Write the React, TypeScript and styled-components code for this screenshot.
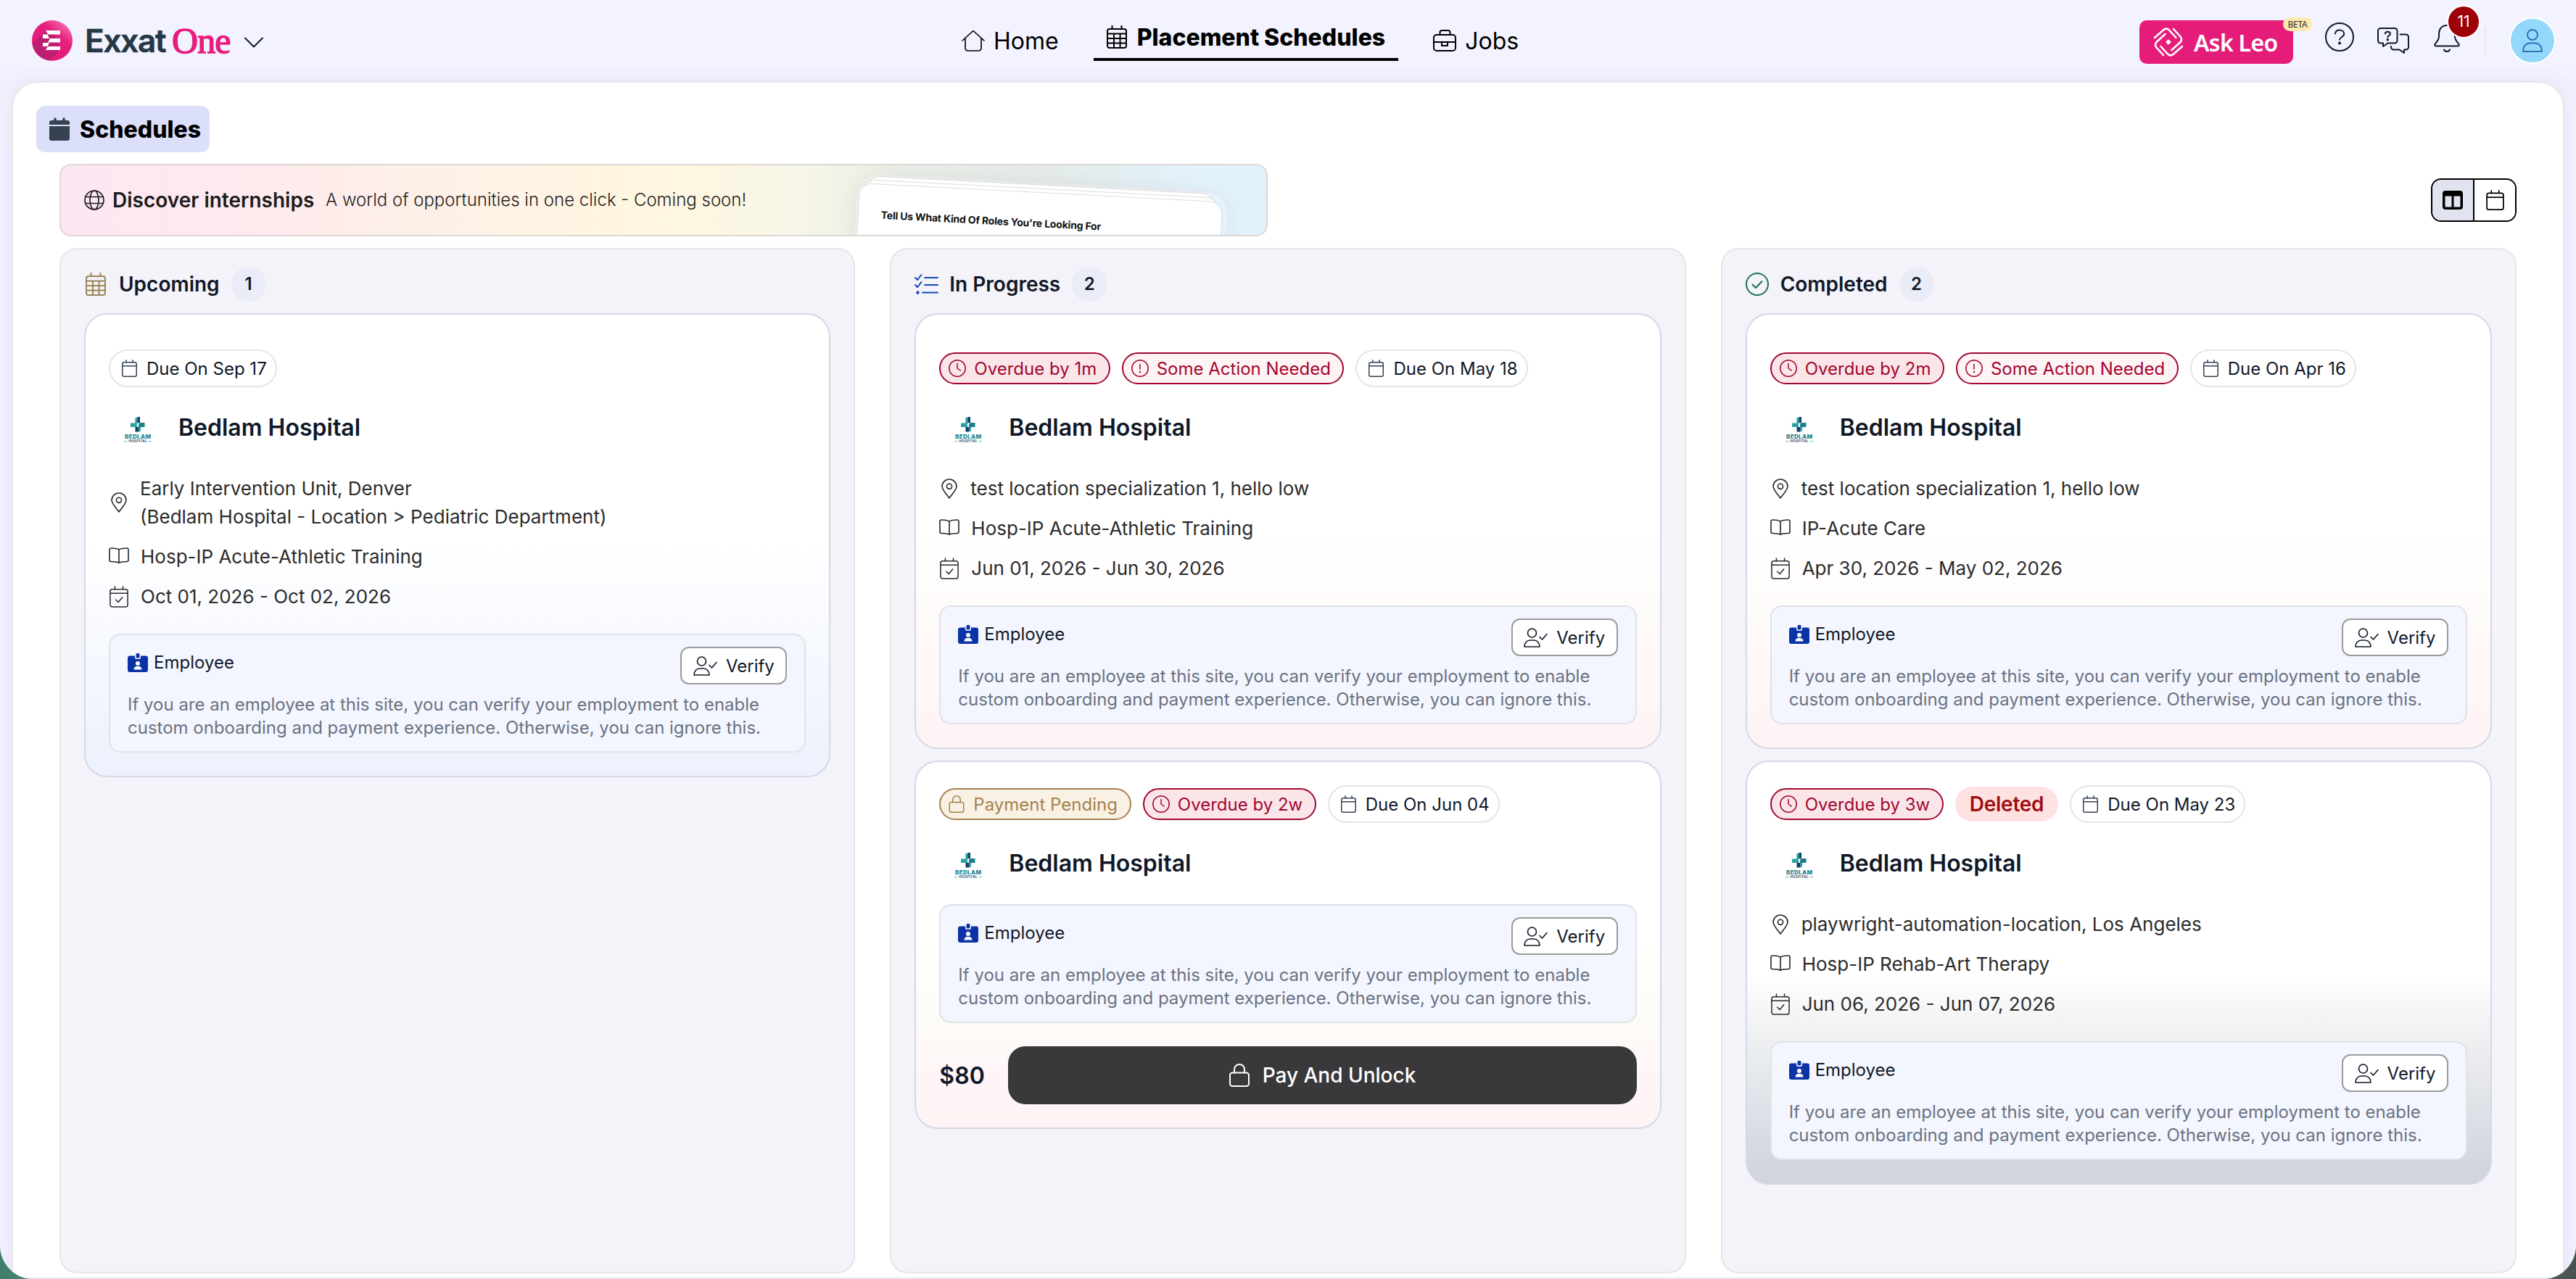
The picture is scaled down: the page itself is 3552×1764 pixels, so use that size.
import React from "react";
import styled, { createGlobalStyle, css } from "styled-components";

const Global = createGlobalStyle`
  *, *::before, *::after { box-sizing: border-box; }
  html, body { margin: 0; padding: 0; }
  body {
    background: linear-gradient(90deg, #417f6b 0, #4c8a74 60px, #5a6660 3500px, #46504c 3552px);
    font-family: Inter, "Liberation Sans", sans-serif;
    color: #101828;
    overflow: hidden;
  }
`;

/* ---------- icons ---------- */

const Glyph = styled.svg<{ $top?: number; $thin?: boolean }>`
  display: block;
  flex: none;
  fill: none;
  stroke: currentColor;
  stroke-width: ${(p) => (p.$thin ? 1.650 : 2)};
  stroke-linecap: round;
  stroke-linejoin: round;
  overflow: visible;
  margin-top: ${(p) => p.$top ?? 0}px;
`;

type IconProps = { w: number; h: number };

const HomeIcon = () => (
  <Glyph $thin width={32} height={30} viewBox="0 0 32 30">
    <path d="M1 15 16 1.500 31 15M5 12v13.500a3.500 3.500 0 0 0 3.500 3.500h15a3.500 3.500 0 0 0 3.500-3.500V12" />
  </Glyph>
);

const GridCalendarIcon = () => (
  <Glyph width={28} height={32} viewBox="0 0 28 32">
    <g strokeLinecap="butt">
      <path d="M7.500 0v5M20.500 0v5" />
      <rect x="1" y="5" width="26" height="26" rx="3" />
      <path d="M1 11.500h26M10 11.500v19.500M18.500 11.500v19.500M1 18h26M1 24.500h26" />
    </g>
  </Glyph>
);

const CalendarIcon = ({ w, h }: IconProps) => (
  <Glyph width={w} height={h} viewBox="0 0 28 32">
    <path d="M8 1v4M20 1v4M1 11.500h26" />
    <rect x="1" y="5" width="26" height="26" rx="3" />
  </Glyph>
);

const CalendarCheckIcon = () => (
  <Glyph $thin width={26} height={30} viewBox="0 0 28 32">
    <path d="M8 1v4M20 1v4M1 11h26M9.500 20.500l3.500 3.500 6-7" />
    <rect x="1" y="5" width="26" height="26" rx="3" />
  </Glyph>
);

const SolidCalendarIcon = () => (
  <Glyph width={28} height={32} viewBox="0 0 28 32">
    <path d="M8 2v5M20 2v5" strokeWidth="3.500" />
    <path d="M3 4h22a3 3 0 0 1 3 3v3H0V7a3 3 0 0 1 3-3zM0 12h28v17a3 3 0 0 1-3 3H3a3 3 0 0 1-3-3z" fill="currentColor" stroke="none" />
  </Glyph>
);

const BriefcaseIcon = () => (
  <Glyph width={32} height={30} viewBox="0 0 32 30">
    <rect x="1" y="7" width="30" height="22" rx="4" />
    <path d="M9.500 7V3.500A2.500 2.500 0 0 1 12 1h9a2.500 2.500 0 0 1 2.500 2.500V7M1 17h30M12 17v5h8v-5" />
  </Glyph>
);

const GlobeIcon = () => (
  <Glyph $thin width={28} height={28} viewBox="0 0 28 28">
    <circle cx="14" cy="14" r="13" />
    <ellipse cx="14" cy="14" rx="6" ry="13" />
    <path d="M2 9.500h24M2 18.500h24" />
  </Glyph>
);

const ChevronIcon = () => (
  <Glyph width={26} height={15} viewBox="0 0 26 15" $top={4}>
    <path d="M1 1.500l12 12 12-12" />
  </Glyph>
);

const QuestionIcon = () => (
  <Glyph width={40} height={40} viewBox="0 0 40 40" $top={-10}>
    <circle cx="20" cy="20" r="19" />
    <path d="M14 15.500c.3-3 2.500-5 6-5s6.200 2.200 6.200 5.200c0 4.200-6.200 4.300-6.200 8" />
    <circle cx="20" cy="28.500" r="1" fill="currentColor" />
  </Glyph>
);

const ChatIcon = () => (
  <Glyph width={44} height={36} viewBox="0 0 44 36">
    <path d="M4.500 1H24a3.500 3.500 0 0 1 3.500 3.500V18a3.500 3.500 0 0 1-3.500 3.500h-9.500L8 26v-4.500H4.500A3.500 3.500 0 0 1 1 18V4.500A3.500 3.500 0 0 1 4.500 1z" />
    <path d="M31.500 9.500h8A3.500 3.500 0 0 1 43 13v14a3.500 3.500 0 0 1-3.500 3.500H37V35l-6.500-4.500H22.500A3.500 3.500 0 0 1 19 27v-1" />
    <path d="M10.800 8.500c.2-1.800 1.500-2.800 3.500-2.800s3.600 1.200 3.600 3c0 2.400-3.600 2.400-3.600 4.600" />
    <circle cx="14.300" cy="16.700" r=".8" fill="currentColor" />
  </Glyph>
);

const BellIcon = () => (
  <Glyph width={36} height={40} viewBox="0 0 36 40">
    <path d="M18 2C11 2 7 7 7 13.500v4c0 4.500-3.500 7.500-5.500 10.500-.8 1.300 0 2.500 1.500 2.500h30c1.500 0 2.300-1.200 1.500-2.500C32.500 25 29 22 29 17.500v-4C29 7 25 2 18 2zM14 35.500a4.300 4 0 0 0 8 0" />
  </Glyph>
);

const PersonIcon = () => (
  <Glyph width={28} height={32} viewBox="0 0 28 32">
    <circle cx="14" cy="8" r="7" />
    <path d="M1 31c0-7 4-11.500 9.500-11.500h7C23 19.500 27 24 27 31z" />
  </Glyph>
);

const LeoIcon = () => (
  <Glyph width={40} height={40} viewBox="0 0 40 40">
    <g strokeWidth="2.600">
      <path d="M1 14 13.500 3q4-3 7.500.5L30.500 14" />
      <path d="M27 2l9.500 10.500q3 4 0 7.500L24.500 31" />
      <path d="M39 26 26.500 37q-4 3-7.500-.5L9.500 26" />
      <path d="M13 38 3.500 27.500q-3-4 0-7.500L15.500 9" />
    </g>
    <path d="M20 17.500l2.500 2.500-2.500 2.500-2.500-2.500z" fill="currentColor" />
  </Glyph>
);

const BoardIcon = () => (
  <Glyph width={28} height={26} viewBox="0 0 28 26">
    <path
      d="M4 0h20a4 4 0 0 1 4 4v18a4 4 0 0 1-4 4H4a4 4 0 0 1-4-4V4a4 4 0 0 1 4-4zM3.500 7.500v15h9v-15zM15.500 7.500v15h9v-15z"
      fill="currentColor"
      fillRule="evenodd"
      stroke="none"
    />
  </Glyph>
);

const TasksIcon = () => (
  <Glyph width={33} height={28} viewBox="0 0 33 28">
    <path d="M1 5l3 3 5.500-7M1 15l3 3 5.500-7M14 5h18M14 15h18M11 25.500h21" />
    <circle cx="4.500" cy="25.500" r="1.200" fill="currentColor" />
  </Glyph>
);

const DoneIcon = () => (
  <Glyph width={32} height={32} viewBox="0 0 32 32">
    <circle cx="16" cy="16" r="15" />
    <path d="M9.500 16.500l4.500 4.500 8.500-9" />
  </Glyph>
);

const ClockIcon = () => (
  <Glyph width={24} height={24} viewBox="0 0 24 24">
    <g strokeWidth="1.500">
      <circle cx="12" cy="12" r="11.200" />
      <path d="M12 5.500V12l4.300 3" />
    </g>
  </Glyph>
);

const AlertIcon = () => (
  <Glyph width={24} height={24} viewBox="0 0 24 24">
    <g strokeWidth="1.500">
      <circle cx="12" cy="12" r="11.200" />
      <path d="M12 6.500v6.500" />
      <circle cx="12" cy="17" r=".5" fill="currentColor" />
    </g>
  </Glyph>
);

const LockIcon = ({ w, h }: IconProps) => (
  <Glyph width={w} height={h} viewBox="0 0 28 32">
    <rect x="1" y="12.500" width="26" height="18.500" rx="3.500" />
    <path d="M7 12.500V8a7 7 0 0 1 14 0v4.500" />
  </Glyph>
);

const PinIcon = () => (
  <Glyph $thin width={22} height={28} viewBox="0 0 22 28">
    <path d="M11 27C8.500 23.500 1 15.500 1 10.800a10 9.800 0 0 1 20 0C21 15.500 13.500 23.500 11 27z" />
    <circle cx="11" cy="10.800" r="3.600" />
  </Glyph>
);

const BookIcon = () => (
  <Glyph $thin width={28} height={22} viewBox="0 0 28 22">
    <path d="M14 3C11 1.200 7 1 3 1a2 2 0 0 0-2 2v14.500a2 2 0 0 0 2 2c4 0 8 0 11 1.700 3-1.700 7-1.700 11-1.700a2 2 0 0 0 2-2V3a2 2 0 0 0-2-2c-4 0-8 .2-11 2zM14 3v18" />
  </Glyph>
);

const BadgeIcon = () => (
  <Glyph width={28} height={26} viewBox="0 0 28 26">
    <path
      d="M3 3.500h7V6a2 2 0 0 0 2 2h4a2 2 0 0 0 2-2V3.500h7a3 3 0 0 1 3 3V23a3 3 0 0 1-3 3H3a3 3 0 0 1-3-3V6.500a3 3 0 0 1 3-3z"
      fill="#0c33a6"
      stroke="none"
    />
    <rect x="11.500" y="0" width="5" height="6.500" rx="1.500" fill="#0c33a6" stroke="none" />
    <circle cx="14" cy="14" r="3" fill="#fff" stroke="none" />
    <path d="M8.500 22.500c0-3 2-4.500 4-4.500h3c2 0 4 1.500 4 4.500z" fill="#fff" stroke="none" />
  </Glyph>
);

const UserCheckIcon = () => (
  <Glyph $thin width={33} height={27} viewBox="0 0 33 27">
    <circle cx="11.500" cy="7" r="6" />
    <path d="M1 26c0-5.500 3.500-9 8-9h5c4.500 0 8 3.500 8 9zM22 12.500l3.500 3.500 6.500-7.500" />
  </Glyph>
);

const BrandMark = () => (
  <Glyph width={56} height={56} viewBox="0 0 56 56">
    <defs>
      <linearGradient id="brand" x1="0.85" y1="0.05" x2="0.45" y2="0.55">
        <stop offset="0" stopColor="#f472ae" />
        <stop offset="0.600" stopColor="#e6207f" />
        <stop offset="1" stopColor="#e51c7c" />
      </linearGradient>
      <clipPath id="brandClip">
        <circle cx="28" cy="28" r="28" />
      </clipPath>
    </defs>
    <g clipPath="url(#brandClip)" stroke="none">
      <rect width="56" height="56" fill="url(#brand)" />
      <path d="M20 14 0 32v24h24l15-15-9-25z" fill="#bf1f70" />
    </g>
    <path
      d="M19 14h20v5.500H22zM15 19.500h6.500l2.500 5.500h-9zM25 25h14v5.500H22zM15 31h9l-2.500 5h-6.500zM22 36h17v5H19z"
      fill="#fff"
      stroke="none"
    />
  </Glyph>
);

const MarkName = styled.text`
  font: 800 8px Inter, sans-serif;
  fill: #1b8088;
  stroke: none;
`;
const MarkSub = styled.text`
  font: 700 4.400px Inter, sans-serif;
  fill: #2a4468;
  stroke: none;
`;

const BedlamMark = () => (
  <Glyph width={40} height={36} viewBox="0 0 40 36">
    <g stroke="none">
      <path d="M16.500 1.500 20 0v9l-3.500 1z" fill="#1d9c9c" />
      <path d="M20 0h3v8h-3z" fill="#1c3a63" />
      <path d="M10 8.500h7L19 11v3h-9z" fill="#2aa3a0" />
      <path d="M22 8h7.500v6H21v-3z" fill="#1b7f8e" />
      <path d="M16.500 14h5v6.500h-5z" fill="#1c3a63" />
      <path d="M21 14h3v5.500l-3 1z" fill="#2aa3a0" />
    </g>
    <MarkName x="20" y="30" textAnchor="middle" textLength="36">BEDLAM</MarkName>
    <MarkSub x="20" y="35.200" textAnchor="middle" textLength="25">HOSPITAL</MarkSub>
    <path d="M1.500 33.700h3.500M35 33.700h3.500" stroke="#2aa3a0" strokeWidth=".8" />
  </Glyph>
);

/* ---------- shell ---------- */

const Page = styled.div`
  width: 3552px;
  height: 1764px;
  display: flex;
  flex-direction: column;
  background: linear-gradient(180deg, #f3f3ff 0, #f3f3ff 90px, #f0f0fc 112px, #f1f0ff 300px);
  border-radius: 0 0 46px 46px;
  overflow: hidden;
`;

const Header = styled.header`
  height: 112px;
  flex: none;
  display: flex;
  align-items: center;
  padding: 0 28px 0 44px;
`;

const Brand = styled.div`
  width: 1282px;
  display: flex;
  align-items: center;
`;
const Word = styled.span<{ $serif?: boolean }>`
  white-space: nowrap;
  line-height: 56px;
  ${(p) =>
    p.$serif
      ? css`
          font: 400 50px/56px "Liberation Serif", serif;
          color: #e71d7e;
          -webkit-text-stroke: 1.500px #e71d7e;
          width: 80px;
          letter-spacing: -0.900px;
          margin: 0 20px 0 8px;
        `
      : css`
          font-size: 44px;
          font-weight: 600;
          color: #263746;
          -webkit-text-stroke: 0.600px #263746;
          letter-spacing: -1.200px;
          width: 112px;
          margin-left: 17px;
        `}
`;

const Nav = styled.nav`
  display: flex;
  align-items: center;
  gap: 48px;
  color: #000;
`;
const NavItem = styled.a<{ $active?: boolean }>`
  display: flex;
  align-items: center;
  gap: 12px;
  height: 56px;
  font-size: 32px;
  white-space: nowrap;
  ${(p) =>
    p.$active &&
    css`
      font-weight: 800;
      padding: 0 18px 6px;
      border-bottom: 4px solid #000;
      gap: 14px;
    `}
`;

const Tools = styled.div`
  margin-left: auto;
  display: flex;
  align-items: center;
  color: #101828;
`;
const LeoButton = styled.button`
  position: relative;
  display: flex;
  align-items: center;
  gap: 15px;
  width: 212px;
  height: 60px;
  margin: 4px 44px 0 0;
  padding: 0 0 0 20px;
  border: 0;
  border-radius: 10px;
  background: #e61c7b;
  color: #fff;
  font: 600 32px "Noto Sans", sans-serif;
  letter-spacing: -0.700px;
  white-space: nowrap;
`;
const Beta = styled.span`
  position: absolute;
  left: 198px;
  top: -4px;
  width: 40px;
  height: 19px;
  border-radius: 10px;
  background: #fdeab0;
  color: #2b2b2b;
  font: 400 12px/19px "Noto Sans", sans-serif;
  letter-spacing: -0.200px;
  text-align: center;
`;
const Tool = styled.span<{ $gap: number; $drop?: number }>`
  position: relative;
  margin-right: ${(p) => p.$gap}px;
  margin-top: ${(p) => p.$drop ?? 0}px;
`;
const Alerts = styled.span`
  position: absolute;
  left: 18px;
  top: -26px;
  width: 46px;
  height: 46px;
  border: 2px solid #fff;
  border-radius: 50%;
  background: #9d0006;
  color: #fff;
  font-size: 21px;
  line-height: 42px;
  text-align: center;
`;
const Rule = styled.span`
  width: 2px;
  height: 40px;
  background: #f9dcee;
  margin-right: 32px;
`;
const Avatar = styled.span`
  width: 64px;
  height: 64px;
  border: 2px solid #fff;
  border-radius: 50%;
  background: #93d8fb;
  color: #2a77b5;
  display: grid;
  place-items: center;
`;

const Panel = styled.main`
  flex: 1;
  margin: 0 16px;
  padding: 32px 0 6px;
  border: 2px solid #e6e6eb;
  border-radius: 36px 36px 0 0;
  background: #fff;
  box-shadow: 0 0 24px rgba(120, 110, 200, 0.08);
  display: flex;
  flex-direction: column;
  gap: 16px;
`;

const PageTab = styled.div`
  align-self: flex-start;
  margin-left: 32px;
  width: 239px;
  height: 64px;
  display: flex;
  align-items: center;
  gap: 14px;
  padding-left: 18px;
  border-radius: 12px;
  background: #dbdffa;
  color: #364152;
  strong {
    font-size: 32px;
    font-weight: 800;
    color: #000;
  }
`;

const BannerRow = styled.div`
  display: flex;
  align-items: center;
  justify-content: space-between;
  padding: 0 64px;
`;
const Banner = styled.section`
  position: relative;
  width: 1666px;
  height: 100px;
  overflow: hidden;
  display: flex;
  align-items: center;
  padding: 0 0 1px 32px;
  border: 2px solid #ded9d6;
  border-radius: 16px;
  background: linear-gradient(90deg, #fde6f3 0, #feebec 20%, #fef2e5 36%, #fff7e0 50%, #f8f6e6 60%, #eaeee8 70%, #e4ebea 82%, #e3f3fe 96%, #e0f1fc 100%);
  color: #1c1c1c;
`;
const BannerTitle = styled.strong`
  width: 294px;
  margin-left: 11px;
  font-size: 28px;
  font-weight: 600;
  white-space: nowrap;
`;
const BannerText = styled.span`
  font-size: 24px;
  font-weight: 300;
  color: #222;
  white-space: nowrap;
`;
const Sheet = styled.div<{ $x: number; $y: number; $w: number; $outline?: boolean }>`
  position: absolute;
  left: ${(p) => p.$x}px;
  top: ${(p) => p.$y}px;
  width: ${(p) => p.$w}px;
  height: 200px;
  transform: rotate(3deg);
  transform-origin: 0 0;
  border-radius: ${(p) => (p.$outline ? 32 : 18)}px;
  background: ${(p) => (p.$outline ? "transparent" : "#fff")};
  border: ${(p) => (p.$outline ? "2px solid #e6e6ea" : "1px solid #dcdcdc")};
  box-shadow: ${(p) => (p.$outline ? "0 0 24px rgba(90,90,60,.08)" : "none")};
  padding: 32px 31px;
  font-size: 14px;
  font-weight: 700;
  line-height: 20px;
  letter-spacing: -0.180px;
  color: #111;
  white-space: nowrap;
`;

const Toggle = styled.div`
  display: flex;
  width: 118px;
  height: 60px;
  border: 2px solid #000;
  border-radius: 14px;
  overflow: hidden;
  color: #000;
`;
const ToggleCell = styled.button<{ $on?: boolean }>`
  flex: 1;
  display: grid;
  place-items: center;
  padding: 0;
  border: 0;
  color: inherit;
  background: ${(p) => (p.$on ? "#e1e4f0" : "#fff")};
  & + & {
    border-left: 2px solid #000;
  }
`;

/* ---------- board ---------- */

const Board = styled.div`
  flex: 1;
  display: grid;
  grid-template-columns: repeat(3, 1fr);
  gap: 48px;
  padding: 0 64px;
`;
const Column = styled.section`
  display: flex;
  flex-direction: column;
  gap: 16px;
  padding: 24px 32px;
  border: 2px solid #e5e5ea;
  border-radius: 24px;
  background: #f4f3f9;
`;
const ColumnHead = styled.header`
  height: 48px;
  display: flex;
  align-items: center;
  gap: 16px;
  font-size: 28px;
  font-weight: 600;
  color: #101828;
`;
const HeadIcon = styled.span<{ $color: string }>`
  width: 32px;
  display: flex;
  justify-content: center;
  color: ${(p) => p.$color};
`;
const Count = styled.span`
  width: 48px;
  height: 48px;
  border-radius: 50%;
  background: #eaedf8;
  font-size: 24px;
  line-height: 47px;
  text-align: center;
`;

type Tone = "blue" | "rose" | "warm" | "grey";
const fades: Record<Tone, string> = {
  blue: "#fff 50%, #edf2fd 96%",
  rose: "#fff 50%, #fff4f5 96%",
  warm: "#fff 50%, #fdfbf7 72%, #fff5f8 86%, #fff4f4 100%",
  grey: "#fff 50%, #f1f2f3 63%, #d1d5de 96%",
};
const CardBox = styled.article<{ $tone: Tone; $first: boolean }>`
  display: flex;
  flex-direction: column;
  gap: 24px;
  padding: ${(p) => (p.$first ? 48 : 32)}px 32px 32px;
  border: 2px solid #d3d9e7;
  border-radius: 32px;
  background: linear-gradient(180deg, ${(p) => fades[p.$tone]});
`;
const Chips = styled.div`
  display: flex;
  align-items: center;
  gap: 16px;
  height: 52px;
`;
type ChipKind = "due" | "overdue" | "action" | "pending" | "deleted";
const alertChip = css`
  gap: 11px;
  padding: 0 16.500px 0 11px;
  border: 2px solid #a3062f;
  color: #a3062f;
`;
const chipStyles = {
  due: css`
    height: 52px;
    padding: 0 12px 0 16px;
    border: 2px solid #e5e5ea;
    background: #fff;
    gap: 13px;
    svg { color: #344054; }
  `,
  overdue: css`
    ${alertChip}
    background: #fae6e9;
  `,
  action: css`
    ${alertChip}
    background: #fff4f5;
  `,
  pending: css`
    border: 2px solid #a5814f;
    background: #f9f1e4;
    color: #a5814f;
  `,
  deleted: css`
    height: 48px;
    padding: 0 20px;
    background: #fee2e2;
    color: #a10d12;
    font-size: 28px;
    font-weight: 600;
    letter-spacing: -0.250px;
  `,
};
const ChipBox = styled.span<{ $kind: ChipKind }>`
  height: 44px;
  display: flex;
  align-items: center;
  gap: 12px;
  padding: 0 17px 0 11px;
  border-radius: 26px;
  font-size: 24px;
  white-space: nowrap;
  ${(p) => chipStyles[p.$kind]}
`;

const Site = styled.div`
  height: 64px;
  display: flex;
  align-items: center;
`;
const SiteLogo = styled.span`
  width: 96px;
  padding: 5px 0 0 20px;
`;
const SiteName = styled.h3`
  margin: 0 0 1px;
  font-size: 32px;
  font-weight: 600;
  white-space: nowrap;
`;
const Facts = styled.div`
  display: flex;
  flex-direction: column;
  gap: 16px;
  padding: 8px 0;
  color: #2b2b2b;
`;
const Fact = styled.div`
  display: flex;
  align-items: center;
  font-size: 26px;
  line-height: 39px;
  white-space: nowrap;
`;
const FactIcon = styled.span<{ $lift?: number }>`
  width: 44px;
  display: flex;
  margin-top: ${(p) => -(p.$lift ?? 0)}px;
`;
const PinSlot = styled(FactIcon)`
  padding-left: 3px;
  width: 43px;
`;
const DateSlot = styled(FactIcon)`
  padding-left: 1px;
`;

const Notice = styled.div`
  height: 164px;
  padding: 16px 24px;
  border: 2px solid #e1e2e6;
  border-radius: 16px;
  background: #f3f6ff;
`;
const NoticeHead = styled.div`
  display: flex;
  justify-content: space-between;
  align-items: flex-start;
  height: 64px;
`;
const NoticeLabel = styled.span`
  display: flex;
  align-items: center;
  gap: 8px;
  height: 43px;
  font-size: 24px;
`;
const VerifyButton = styled.button`
  display: flex;
  align-items: center;
  gap: 12px;
  height: 52px;
  padding: 0 15.500px;
  border: 2px solid #9b9b9b;
  border-radius: 12px;
  background: #fff;
  color: #101828;
  font: 400 24px Inter, sans-serif;
`;
const NoticeText = styled.p`
  margin: 0;
  font-size: 24px;
  line-height: 32px;
  color: #6b7280;
  white-space: nowrap;
`;

const PayRow = styled.div`
  display: flex;
  align-items: center;
  margin-top: 8px;
  height: 80px;
`;
const Price = styled.span`
  width: 95px;
  font-size: 32px;
  font-weight: 600;
`;
const PayButton = styled.button`
  flex: 1;
  height: 80px;
  display: flex;
  align-items: center;
  justify-content: center;
  gap: 18px;
  border: 0;
  border-radius: 24px;
  background: #39393b;
  color: #fff;
  font: 500 28px Inter, sans-serif;
`;

/* ---------- data ---------- */

type CardData = {
  tone: Tone;
  chips: [ChipKind, string][];
  place?: string[];
  course?: string;
  dates?: string;
  price?: string;
};
type ColumnData = { title: string; color: string; icon: React.ReactNode; cards: CardData[] };

const columns: ColumnData[] = [
  {
    title: "Upcoming",
    color: "#9c8656",
    icon: <GridCalendarIcon />,
    cards: [
      {
        tone: "blue",
        chips: [["due", "Due On Sep 17"]],
        place: ["Early Intervention Unit, Denver", "(Bedlam Hospital - Location > Pediatric Department)"],
        course: "Hosp-IP Acute-Athletic Training",
        dates: "Oct 01, 2026 - Oct 02, 2026",
      },
    ],
  },
  {
    title: "In Progress",
    color: "#1149b8",
    icon: <TasksIcon />,
    cards: [
      {
        tone: "rose",
        chips: [["overdue", "Overdue by 1m"], ["action", "Some Action Needed"], ["due", "Due On May 18"]],
        place: ["test location specialization 1, hello low"],
        course: "Hosp-IP Acute-Athletic Training",
        dates: "Jun 01, 2026 - Jun 30, 2026",
      },
      {
        tone: "warm",
        chips: [["pending", "Payment Pending"], ["overdue", "Overdue by 2w"], ["due", "Due On Jun 04"]],
        price: "$80",
      },
    ],
  },
  {
    title: "Completed",
    color: "#1f7058",
    icon: <DoneIcon />,
    cards: [
      {
        tone: "rose",
        chips: [["overdue", "Overdue by 2m"], ["action", "Some Action Needed"], ["due", "Due On Apr 16"]],
        place: ["test location specialization 1, hello low"],
        course: "IP-Acute Care",
        dates: "Apr 30, 2026 - May 02, 2026",
      },
      {
        tone: "grey",
        chips: [["overdue", "Overdue by 3w"], ["deleted", "Deleted"], ["due", "Due On May 23"]],
        place: ["playwright-automation-location, Los Angeles"],
        course: "Hosp-IP Rehab-Art Therapy",
        dates: "Jun 06, 2026 - Jun 07, 2026",
      },
    ],
  },
];

const chipIcons: Record<ChipKind, React.ReactNode> = {
  due: <CalendarIcon w={21} h={24} />,
  overdue: <ClockIcon />,
  action: <AlertIcon />,
  pending: <LockIcon w={22} h={24} />,
  deleted: null,
};

const Card = ({ card, first }: { card: CardData; first: boolean }) => (
  <CardBox $tone={card.tone} $first={first}>
    <Chips>
      {card.chips.map(([kind, label]) => (
        <ChipBox key={label} $kind={kind}>
          {chipIcons[kind]}
          <span>{label}</span>
        </ChipBox>
      ))}
    </Chips>
    <Site>
      <SiteLogo><BedlamMark /></SiteLogo>
      <SiteName>Bedlam Hospital</SiteName>
    </Site>
    {card.place && (
      <Facts>
        <Fact>
          <PinSlot><PinIcon /></PinSlot>
          <div>{card.place.map((line) => <div key={line}>{line}</div>)}</div>
        </Fact>
        <Fact>
          <FactIcon $lift={4}><BookIcon /></FactIcon>
          {card.course}
        </Fact>
        <Fact>
          <DateSlot><CalendarCheckIcon /></DateSlot>
          {card.dates}
        </Fact>
      </Facts>
    )}
    <Notice>
      <NoticeHead>
        <NoticeLabel><BadgeIcon />Employee</NoticeLabel>
        <VerifyButton><UserCheckIcon />Verify</VerifyButton>
      </NoticeHead>
      <NoticeText>
        If you are an employee at this site, you can verify your employment to enable
        <br />
        custom onboarding and payment experience. Otherwise, you can ignore this.
      </NoticeText>
    </Notice>
    {card.price && (
      <PayRow>
        <Price>{card.price}</Price>
        <PayButton><LockIcon w={28} h={32} />Pay And Unlock</PayButton>
      </PayRow>
    )}
  </CardBox>
);

export default function App() {
  return (
    <Page>
      <Global />
      <Header>
        <Brand>
          <BrandMark />
          <Word>Exxat</Word>
          <Word $serif>One</Word>
          <ChevronIcon />
        </Brand>
        <Nav>
          <NavItem><HomeIcon />Home</NavItem>
          <NavItem $active><GridCalendarIcon />Placement Schedules</NavItem>
          <NavItem><BriefcaseIcon />Jobs</NavItem>
        </Nav>
        <Tools>
          <LeoButton><LeoIcon />Ask Leo<Beta>BETA</Beta></LeoButton>
          <Tool $gap={32}><QuestionIcon /></Tool>
          <Tool $gap={34}><ChatIcon /></Tool>
          <Tool $gap={34} $drop={-6}><BellIcon /><Alerts>11</Alerts></Tool>
          <Rule />
          <Avatar><PersonIcon /></Avatar>
        </Tools>
      </Header>
      <Panel>
        <PageTab><SolidCalendarIcon /><strong>Schedules</strong></PageTab>
        <BannerRow>
          <Banner>
            <GlobeIcon />
            <BannerTitle>Discover internships</BannerTitle>
            <BannerText>A world of opportunities in one click - Coming soon!</BannerText>
            <Sheet $x={1097} $y={10} $w={516} $outline />
            <Sheet $x={1112} $y={14} $w={480} />
            <Sheet $x={1106} $y={19} $w={492} />
            <Sheet $x={1101} $y={24} $w={502}>Tell Us What Kind Of Roles You're Looking For</Sheet>
          </Banner>
          <Toggle>
            <ToggleCell $on><BoardIcon /></ToggleCell>
            <ToggleCell><CalendarIcon w={25} h={28} /></ToggleCell>
          </Toggle>
        </BannerRow>
        <Board>
          {columns.map((col) => (
            <Column key={col.title}>
              <ColumnHead>
                <HeadIcon $color={col.color}>{col.icon}</HeadIcon>
                {col.title}
                <Count>{col.cards.length}</Count>
              </ColumnHead>
              {col.cards.map((card, i) => <Card key={i} card={card} first={i === 0} />)}
            </Column>
          ))}
        </Board>
      </Panel>
    </Page>
  );
}
